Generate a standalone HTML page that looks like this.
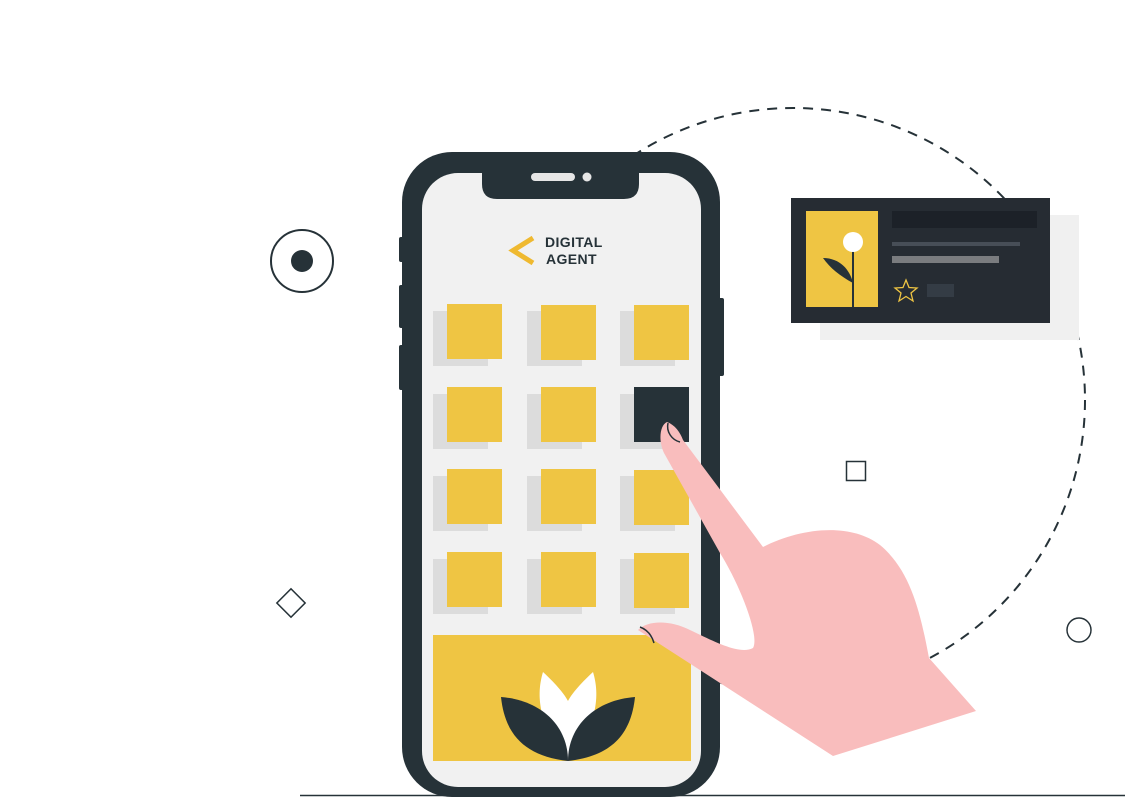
<!DOCTYPE html>
<html><head><meta charset="utf-8"><style>
html,body{margin:0;padding:0;background:#fff;width:1125px;height:798px;overflow:hidden}
svg{display:block}
</style></head><body>
<svg width="1125" height="798" viewBox="0 0 1125 798" xmlns="http://www.w3.org/2000/svg">
<circle cx="793" cy="400" r="292" fill="none" stroke="#263238" stroke-width="2" stroke-dasharray="10 8"/>
<circle cx="302" cy="261" r="31" fill="none" stroke="#263238" stroke-width="2"/>
<circle cx="302" cy="261" r="11" fill="#263238"/>
<rect x="281" y="593" width="20" height="20" fill="none" stroke="#263238" stroke-width="1.5" transform="rotate(45 291 603)"/>
<rect x="846.5" y="461.5" width="19" height="19" fill="#fff" stroke="#263238" stroke-width="1.5"/>
<circle cx="1079" cy="630" r="12" fill="#fff" stroke="#263238" stroke-width="1.5"/>
<line x1="300" y1="795.5" x2="1125" y2="795.5" stroke="#263238" stroke-width="1.5"/>
<rect x="820" y="215" width="259" height="125" fill="#f0f0f0"/>
<rect x="791" y="198" width="259" height="125" fill="#262c33"/>
<rect x="806" y="211" width="72" height="96" fill="#efc543"/>
<line x1="853" y1="242" x2="853" y2="307" stroke="#263238" stroke-width="2"/>
<path d="M823,258 C840,258 850,270 853,283 C840,276 830,268 823,258Z" fill="#263238"/>
<circle cx="853" cy="242" r="10" fill="#fff"/>
<rect x="892" y="211" width="145" height="17" fill="#1c2128"/>
<rect x="892" y="242" width="128" height="4" fill="#474e57"/>
<rect x="892" y="256" width="107" height="7" fill="#7a7c7f"/>
<path d="M906,280 L909,287.5 L917,288 L911,293 L913,301 L906,296.5 L899,301 L901,293 L895,288 L903,287.5Z" fill="none" stroke="#efc543" stroke-width="1.3"/>
<rect x="927" y="284" width="27" height="13" fill="#343c45"/>
<rect x="399" y="237" width="6" height="25" rx="2" fill="#263238"/>
<rect x="399" y="285" width="6" height="43" rx="2" fill="#263238"/>
<rect x="399" y="345" width="6" height="45" rx="2" fill="#263238"/>
<rect x="716" y="298" width="8" height="78" rx="2" fill="#263238"/>
<rect x="402" y="152" width="318" height="645" rx="50" fill="#263238"/>
<rect x="422" y="173" width="279" height="614" rx="36" fill="#f1f1f1"/>
<path d="M482,165 L639,165 L639,184 Q639,199 624,199 L497,199 Q482,199 482,184Z" fill="#263238"/>
<rect x="531" y="173" width="44" height="8" rx="4" fill="#e6e6e6"/>
<circle cx="587" cy="177" r="4.5" fill="#e6e6e6"/>
<path d="M533,238 L513,250.5 L533,263" fill="none" stroke="#efb930" stroke-width="5"/>
<text x="545" y="247" font-family="Liberation Sans, sans-serif" font-weight="bold" font-size="14" fill="#263238" letter-spacing="0.4">DIGITAL</text>
<text x="546" y="264" font-family="Liberation Sans, sans-serif" font-weight="bold" font-size="14" fill="#263238" letter-spacing="0.4">AGENT</text>
<g fill="#dcdcdc">
<rect x="433" y="311" width="55" height="55"/><rect x="527" y="311" width="55" height="55"/><rect x="620" y="311" width="55" height="55"/>
<rect x="433" y="394" width="55" height="55"/><rect x="527" y="394" width="55" height="55"/><rect x="620" y="394" width="55" height="55"/>
<rect x="433" y="476" width="55" height="55"/><rect x="527" y="476" width="55" height="55"/><rect x="620" y="476" width="55" height="55"/>
<rect x="433" y="559" width="55" height="55"/><rect x="527" y="559" width="55" height="55"/><rect x="620" y="559" width="55" height="55"/>
</g>
<g fill="#efc543">
<rect x="447" y="304" width="55" height="55"/><rect x="541" y="305" width="55" height="55"/><rect x="634" y="305" width="55" height="55"/>
<rect x="447" y="387" width="55" height="55"/><rect x="541" y="387" width="55" height="55"/>
<rect x="447" y="469" width="55" height="55"/><rect x="541" y="469" width="55" height="55"/><rect x="634" y="470" width="55" height="55"/>
<rect x="447" y="552" width="55" height="55"/><rect x="541" y="552" width="55" height="55"/><rect x="634" y="553" width="55" height="55"/>
</g>
<rect x="634" y="387" width="55" height="55" fill="#263238"/>
<rect x="433" y="635" width="258" height="126" fill="#efc543"/>
<path d="M543,672 C557,685 565,695 568,701 C571,695 579,685 593,672 C600,695 598,725 568,761 C538,725 536,695 543,672Z" fill="#fff"/>
<path d="M501,697 C540,700 568,725 568,761 C525,756 505,735 501,697Z" fill="#263238"/>
<path d="M635,697 C596,700 568,725 568,761 C611,756 631,735 635,697Z" fill="#263238"/>
<path d="M667,422 C675,425 680,432 683,440 L763,547 C800,528 850,522 880,545 C910,570 920,610 929,658 L976,711 L833,756 L638,630 C648,620 670,620 690,630 C715,642 740,655 753,648 C760,636 740,585 720,553 L664,453 C658,440 660,425 667,422Z" fill="#f9bdbd"/>
<path d="M668,423 C666,432 672,440 680,442" fill="none" stroke="#263238" stroke-width="1.5"/>
<path d="M640,627 C648,630 652,636 654,643" fill="none" stroke="#263238" stroke-width="1.5"/>
</svg>
</body></html>
